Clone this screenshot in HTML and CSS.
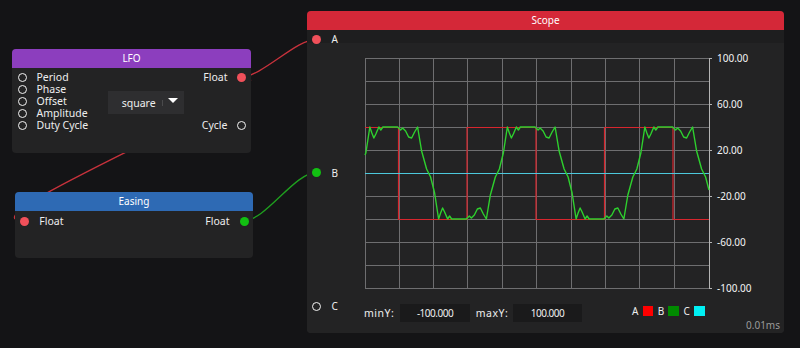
FILE: index.html
```html
<!DOCTYPE html>
<html>
<head>
<meta charset="utf-8">
<title>Node Graph</title>
<link rel="stylesheet" href="styles.css">
</head>
<body>
<div class="canvas">
  <svg class="wires" width="800" height="348" viewBox="0 0 800 348">
    <path class="wire red" d="M241,77 C313,77 -48,220.7 24,220.7"/>
    <path class="wire red" d="M241,77 C262,77 295.7,39.3 316.5,39.3"/>
    <path class="wire green" d="M244,220.7 C265.6,220.7 294.4,172.5 316.5,172.5"/>
  </svg>

  <div class="node lfo">
    <div class="node-title">LFO</div>
    <div class="lfo-body">
      <div class="inputs">
        <div class="pin"><span class="ring"></span><span class="label">Period</span></div>
        <div class="pin"><span class="ring"></span><span class="label">Phase</span></div>
        <div class="pin"><span class="ring"></span><span class="label">Offset</span></div>
        <div class="pin"><span class="ring"></span><span class="label">Amplitude</span></div>
        <div class="pin"><span class="ring"></span><span class="label">Duty Cycle</span></div>
      </div>
      <div class="combo">
        <span class="combo-text">square</span>
        <span class="combo-sep"></span>
        <span class="combo-arrow"></span>
      </div>
      <div class="outputs">
        <div class="pin out"><span class="label">Float</span><span class="dot red"></span></div>
        <div class="pin out"><span class="label">Cycle</span><span class="ring"></span></div>
      </div>
    </div>
  </div>

  <div class="node easing">
    <div class="node-title">Easing</div>
    <div class="easing-body">
      <div class="pin in"><span class="dot red"></span><span class="label">Float</span></div>
      <div class="pin out"><span class="label">Float</span><span class="dot green"></span></div>
    </div>
  </div>

  <div class="node scope">
    <div class="node-title">Scope</div>
    <div class="scope-body">
      <div class="scope-pins">
        <div class="pin"><span class="dot red"></span><span class="label">A</span></div>
        <div class="pin"><span class="dot green"></span><span class="label">B</span></div>
        <div class="pin"><span class="ring"></span><span class="label">C</span></div>
      </div>
      <div class="scope-main">
        <svg class="plot" width="400" height="242" viewBox="358 52 400 242">
          <path class="grid" d="M365.5,58.5V288.5 M399.5,58.5V288.5 M433.5,58.5V288.5 M467.5,58.5V288.5 M502.5,58.5V288.5 M536.5,58.5V288.5 M571.5,58.5V288.5 M605.5,58.5V288.5 M639.5,58.5V288.5 M674.5,58.5V288.5 M365,58.5H709 M365,81.5H709 M365,104.5H709 M365,127.5H709 M365,150.5H709 M365,173.5H709 M365,196.5H709 M365,219.5H709 M365,242.5H709 M365,265.5H709 M365,288.5H709"/>
          <path class="axis" d="M709.5,58V289 M709,58.5H712 M709,104.5H712 M709,150.5H712 M709,196.5H712 M709,242.5H712 M709,288.5H712"/>
          <path class="sig-a" d="M365,127.5H398.5M398.5,127V220M398.5,219.5H467M467,127V220M467,127.5H536M536,127V220M536,219.5H604.5M604.5,127V220M604.5,127.5H673M673,127V220M673,219.5H709"/>
          <path class="sig-c" d="M365,173.5H709"/>
          <polyline class="sig-b" points="365,155 365.85,153 369.85,127 371.85,133 373.85,138 375.85,134 378.85,127 380.85,130 382.85,127 397.6,127 400.6,130 402.6,128 405.6,131 408.6,137 411.6,138 414.6,132 417.6,127 421.6,151 426.6,169 430.6,177 434.6,193 438.6,219 440.6,213 442.6,208 444.6,212 447.6,219 449.6,216 451.6,219 466.35,219 469.35,216 471.35,218 474.35,215 477.35,209 480.35,208 483.35,214 486.35,219 490.35,195 495.35,177 499.35,169 503.35,153 507.35,127 509.35,133 511.35,138 513.35,134 516.35,127 518.35,130 520.35,127 535.1,127 538.1,130 540.1,128 543.1,131 546.1,137 549.1,138 552.1,132 555.1,127 559.1,151 564.1,169 568.1,177 572.1,193 576.1,219 578.1,213 580.1,208 582.1,212 585.1,219 587.1,216 589.1,219 603.85,219 606.85,216 608.85,218 611.85,215 614.85,209 617.85,208 620.85,214 623.85,219 627.85,195 632.85,177 636.85,169 640.85,153 644.85,127 646.85,133 648.85,138 650.85,134 653.85,127 655.85,130 657.85,127 672.6,127 675.6,130 677.6,128 680.6,131 683.6,137 686.6,138 689.6,132 692.6,127 696.6,151 701.6,169 705.6,177 709,190"/>
          <text class="ylab" x="717" y="62">100.00</text>
          <text class="ylab" x="717" y="108">60.00</text>
          <text class="ylab" x="717" y="154">20.00</text>
          <text class="ylab" x="717" y="200">-20.00</text>
          <text class="ylab" x="717" y="246">-60.00</text>
          <text class="ylab" x="717" y="292">-100.00</text>
        </svg>
        <div class="controls">
          <span class="ctl-label">minY:</span>
          <span class="field">-100.000</span>
          <span class="ctl-label max">maxY:</span>
          <span class="field f2">100.000</span>
          <div class="legend">
            <span class="key">A</span><span class="swatch a"></span>
            <span class="key">B</span><span class="swatch b"></span>
            <span class="key">C</span><span class="swatch c"></span>
          </div>
        </div>
        <div class="footer">0.01ms</div>
      </div>
    </div>
  </div>
</div>
</body>
</html>
```
FILE: styles.css
```css
html, body {
  margin: 0;
  padding: 0;
  background: #141416;
}
body {
  font-family: "Noto Sans", "DejaVu Sans", sans-serif;
  color: #eeeeee;
}
.canvas {
  position: relative;
  width: 800px;
  height: 348px;
  overflow: hidden;
  background: #141416;
}
.wires {
  position: absolute;
  left: 0;
  top: 0;
}
.wire {
  fill: none;
  stroke-width: 1.3;
}
.wire.red { stroke: #c8323c; }
.wire.green { stroke: #1fa01f; }

.node {
  position: absolute;
  background: #232324;
  border-radius: 4px;
  box-sizing: border-box;
}
.lfo { left: 12px; top: 49px; width: 239px; height: 104px; }
.easing { left: 15px; top: 192px; width: 238px; height: 66px; }
.scope { left: 307px; top: 11px; width: 477px; height: 322px; }

.node-title {
  height: 19px;
  line-height: 19px;
  text-align: center;
  font-size: 10px;
  color: #ffffff;
  border-radius: 4px 4px 0 0;
}
.lfo .node-title { background: #8c3ebe; }
.easing .node-title { background: #2e6ab4; }
.scope .node-title { background: #d42838; }

.pin {
  display: flex;
  align-items: center;
  height: 12px;
  line-height: 12px;
  font-size: 10.5px;
  white-space: nowrap;
}
.ring {
  flex: none;
  width: 9px;
  height: 9px;
  box-sizing: border-box;
  border: 1.5px solid #f2f2f2;
  border-radius: 50%;
}
.dot {
  flex: none;
  width: 9px;
  height: 9px;
  border-radius: 50%;
}
.dot.red { background: #f0505a; }
.dot.green { background: #12c012; }
.pin .label { margin-left: 10px; }
.pin.out .label { margin-left: 0; margin-right: 9px; }

/* LFO */
.lfo-body {
  display: flex;
  height: 85px;
  box-sizing: border-box;
  padding: 3px 5.5px 0 5.5px;
}
.inputs {
  flex: none;
  width: 90.5px;
  display: flex;
  flex-direction: column;
}
.combo {
  flex: none;
  width: 76px;
  height: 23px;
  margin-top: 20px;
  box-sizing: border-box;
  padding-left: 13.7px;
  background: #2e2e30;
  display: flex;
  align-items: center;
  font-size: 10.5px;
}
.combo-sep {
  margin-left: auto;
  width: 1px;
  height: 6px;
  background: #4a4a4c;
  margin-right: 4.7px;
}
.combo-arrow {
  width: 0;
  height: 0;
  border-left: 5.5px solid transparent;
  border-right: 5.5px solid transparent;
  border-top: 5px solid #ffffff;
  margin-right: 6.3px;
  margin-bottom: 5px;
}
.outputs {
  flex: 1;
  height: 60px;
  display: flex;
  flex-direction: column;
  justify-content: space-between;
  align-items: flex-end;
}

/* Easing */
.easing-body {
  display: flex;
  justify-content: space-between;
  padding: 4px 4.5px;
}
.easing-body .pin.in .label { margin-left: 10.8px; }
.easing-body .pin.out .label { margin-right: 10px; }

/* Scope */
.scope-body {
  display: grid;
  grid-template-columns: 51px 1fr;
  height: 303px;
  border-radius: 0 0 4px 4px;
  background: linear-gradient(to bottom, #1e1e1f 0, #1e1e1f 13px, #232324 13px);
}
.scope-pins {
  display: flex;
  flex-direction: column;
  justify-content: space-between;
  padding: 3px 0 21px 5px;
}
.scope-pins .pin .label { margin-left: 10.5px; font-size: 10px; }
.scope-main {
  display: flex;
  flex-direction: column;
}
.plot {
  display: block;
  margin-top: 22px;
}
.grid {
  fill: none;
  stroke: #6e6e70;
  stroke-width: 1;
}
.axis {
  fill: none;
  stroke: #b4b4b4;
  stroke-width: 1;
}
.sig-a { fill: none; stroke: #d8262e; stroke-width: 1.2; }
.sig-c { fill: none; stroke: #4cc8dc; stroke-width: 1; }
.sig-b { fill: none; stroke: #2ed02e; stroke-width: 1.4; stroke-linejoin: round; }
.ylab {
  font-family: "Noto Sans", "DejaVu Sans", sans-serif;
  font-size: 10px;
  fill: #f4f4f4;
}

.controls {
  display: flex;
  align-items: center;
  height: 18px;
  margin-top: 10px;
  padding-left: 6px;
  font-size: 10.5px;
}
.ctl-label {
  flex: none;
  width: 36px;
  letter-spacing: 0.5px;
}
.ctl-label.max {
  margin-left: 5.7px;
  width: 37.3px;
}
.field {
  flex: none;
  width: 70px;
  height: 18px;
  line-height: 18px;
  text-align: center;
  background: #1a1a1b;
  font-size: 10px;
  letter-spacing: -0.5px;
}
.field.f2 { width: 69px; }
.legend {
  display: flex;
  align-items: center;
  margin-left: 50px;
  margin-bottom: 4px;
  font-size: 10px;
}
.key { margin-left: 4.5px; }
.key:first-child { margin-left: 0; }
.swatch {
  width: 10.5px;
  height: 9.5px;
  margin-left: 4.3px;
}
.swatch.a { background: #ff0000; }
.swatch.b { background: #008a00; }
.swatch.c { background: #00f0f4; }
.footer {
  margin-top: -3px;
  height: 12px;
  line-height: 12px;
  text-align: right;
  padding-right: 4px;
  font-size: 10px;
  color: #9a9a9a;
}
```
